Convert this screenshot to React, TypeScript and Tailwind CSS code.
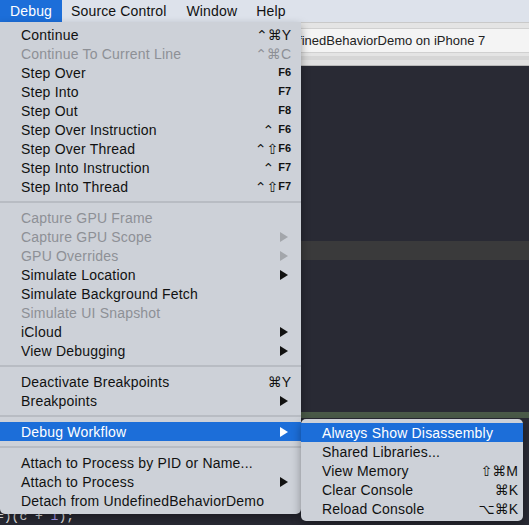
import React from "react";

type Item =
  | { sep: true }
  | {
      sep?: false;
      label: string;
      mod?: string;
      key_?: string;
      small?: boolean;
      arrow?: boolean;
      disabled?: boolean;
      active?: boolean;
    };

const items: Item[] = [
  { label: "Continue", mod: "⌃⌘", key_: "Y" },
  { label: "Continue To Current Line", mod: "⌃⌘", key_: "C", disabled: true },
  { label: "Step Over", key_: "F6", small: true },
  { label: "Step Into", key_: "F7", small: true },
  { label: "Step Out", key_: "F8", small: true },
  { label: "Step Over Instruction", mod: "⌃ ", key_: "F6", small: true },
  { label: "Step Over Thread", mod: "⌃⇧", key_: "F6", small: true },
  { label: "Step Into Instruction", mod: "⌃ ", key_: "F7", small: true },
  { label: "Step Into Thread", mod: "⌃⇧", key_: "F7", small: true },
  { sep: true },
  { label: "Capture GPU Frame", disabled: true },
  { label: "Capture GPU Scope", disabled: true, arrow: true },
  { label: "GPU Overrides", disabled: true, arrow: true },
  { label: "Simulate Location", arrow: true },
  { label: "Simulate Background Fetch" },
  { label: "Simulate UI Snapshot", disabled: true },
  { label: "iCloud", arrow: true },
  { label: "View Debugging", arrow: true },
  { sep: true },
  { label: "Deactivate Breakpoints", mod: "⌘", key_: "Y" },
  { label: "Breakpoints", arrow: true },
  { sep: true },
  { label: "Debug Workflow", arrow: true, active: true },
  { sep: true },
  { label: "Attach to Process by PID or Name..." },
  { label: "Attach to Process", arrow: true },
  { label: "Detach from UndefinedBehaviorDemo" },
];

const subItems: { label: string; sc?: string; active?: boolean }[] = [
  { label: "Always Show Disassembly", active: true },
  { label: "Shared Libraries..." },
  { label: "View Memory", sc: "⇧⌘M" },
  { label: "Clear Console", sc: "⌘K" },
  { label: "Reload Console", sc: "⌥⌘K" },
];

function Arrow({ color }: { color: string }) {
  return (
    <svg width="8" height="10" viewBox="0 0 8 10" className="mr-[3px]">
      <path d="M0 0 L8 5 L0 10 Z" fill={color} />
    </svg>
  );
}

function Row({ it }: { it: Exclude<Item, { sep: true }> }) {
  const color = it.active
    ? "text-white"
    : it.disabled
    ? "text-[#8d9096]"
    : "text-[#111111]";
  return (
    <div
      className={`h-[19px] flex items-center pl-[21px] pr-[10px] text-[14px] leading-none tracking-[0.2px] ${color} ${
        it.active ? "bg-[#1c6ed9]" : ""
      }`}
    >
      <span>{it.label}</span>
      <span className="ml-auto flex items-center tracking-normal">
        {it.mod && (
          <span className="text-[14px] whitespace-pre">{it.mod}</span>
        )}
        {it.key_ && (
          <span
            className={
              it.small ? "text-[11px] font-bold" : "text-[14px]"
            }
          >
            {it.key_}
          </span>
        )}
        {it.arrow && (
          <Arrow
            color={it.active ? "#ffffff" : it.disabled ? "#a3a6ab" : "#111111"}
          />
        )}
      </span>
    </div>
  );
}

export default function App() {
  return (
    <div className="relative w-[529px] h-[525px] overflow-hidden flex flex-col font-['Liberation_Sans',_'DejaVu_Sans',_sans-serif] bg-[#292a34]">
      {/* menu bar */}
      <div className="h-[22px] flex items-stretch bg-[#dde2eb] text-[14px] tracking-[0.15px] text-[#111111] shrink-0">
        <div className="px-[10px] flex items-center bg-[#1c6ed9] text-white">
          Debug
        </div>
        <div className="px-[9px] flex items-center">Source Control</div>
        <div className="px-[10px] ml-[1px] flex items-center">Window</div>
        <div className="px-[9px] flex items-center">Help</div>
      </div>
      {/* toolbar */}
      <div className="h-[44px] bg-[#e4e4e4] border-t border-[#c9c9c9] flex flex-col shrink-0">
        <div className="mt-[5px] h-[25px] bg-[#f4f4f4] border-y border-[#d0d0d0] flex items-center pl-[267px] text-[13px] text-[#222222]">
          UndefinedBehaviorDemo on iPhone 7
        </div>
        <div className="mt-[3px] h-[4px] bg-[#d6d6d6]" />
        <div className="flex-1 bg-[#e0e0e0] border-b border-[#b8b8b8]" />
      </div>
      {/* editor */}
      <div className="flex-1 flex flex-col bg-[#292a34]">
        <div className="h-[175px] shrink-0" />
        <div className="h-[19px] bg-[#3a3a3b] shrink-0" />
        <div className="h-[152px] shrink-0" />
        <div className="h-[6px] bg-[#4a5a48] shrink-0" />
        <div className="h-[90px] shrink-0" />
        <div className="h-[18px] shrink-0 flex items-center font-['Liberation_Mono',_monospace] text-[13px] text-[#e6e6e6] ml-[-4px] whitespace-pre">
          {"=)(c + "}
          <span className="text-[#a99cf5]">1</span>
          {");"}
        </div>
      </div>

      {/* main menu */}
      <div className="absolute left-0 top-[22px] w-[301px] bg-[#cdd1d8] rounded-b-[5px] pt-[3px] pb-[4px] shadow-[0_4px_10px_rgba(0,0,0,0.35)]">
        {items.map((it, i) =>
          it.sep ? (
            <div key={i} className="h-[12px] flex items-center">
              <div className="w-full h-[2px] bg-[#b8bcc3]" />
            </div>
          ) : (
            <Row key={i} it={it} />
          )
        )}
      </div>

      {/* submenu */}
      <div className="absolute left-[301px] top-[419px] w-[222px] bg-[#cdd1d8] rounded-[5px] pt-[4px] pb-[3px] shadow-[0_4px_10px_rgba(0,0,0,0.35)]">
        {subItems.map((it, i) => (
          <div
            key={i}
            className={`h-[19px] flex items-center pl-[21px] pr-[5px] text-[14px] leading-none tracking-[0.2px] ${
              it.active ? "bg-[#1c6ed9] text-white" : "text-[#111111]"
            }`}
          >
            <span>{it.label}</span>
            {it.sc && <span className="ml-auto tracking-normal">{it.sc}</span>}
          </div>
        ))}
      </div>
    </div>
  );
}
